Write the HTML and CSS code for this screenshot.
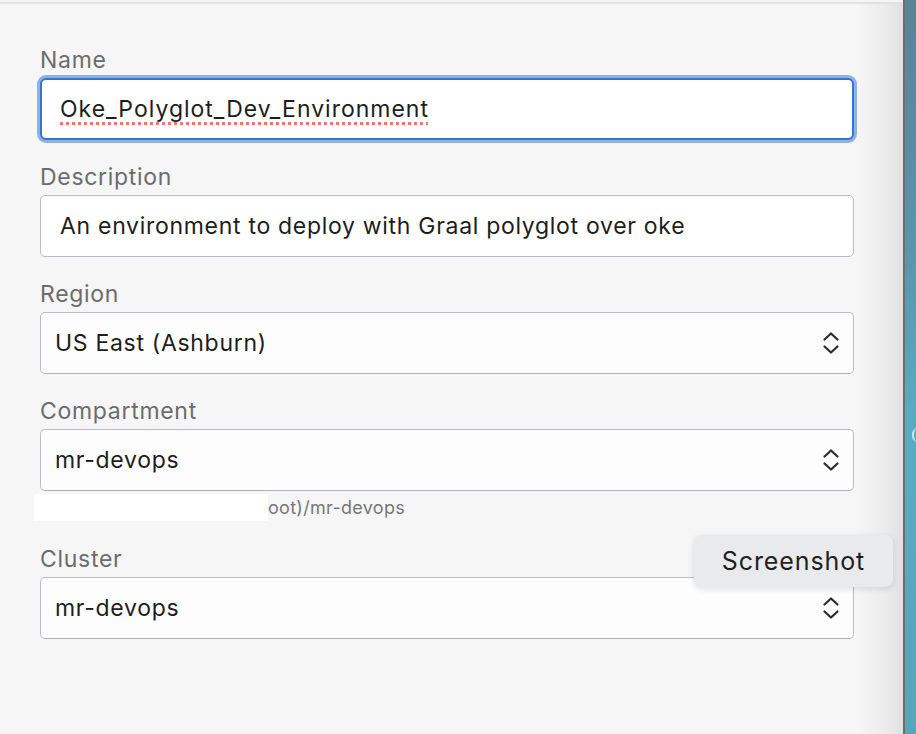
FILE: index.html
```html
<!DOCTYPE html>
<html>
<head>
<meta charset="utf-8">
<link rel="stylesheet" href="styles.css">
</head>
<body>
<div class="window">
  <main class="panel">
    <div class="topline"></div>
    <form class="form">
      <div class="field">
        <div class="label">Name</div>
        <div class="input focused"><span class="misspelled">Oke_Polyglot_Dev_Environment</span></div>
      </div>
      <div class="field">
        <div class="label">Description</div>
        <div class="input">An environment to deploy with Graal polyglot over oke</div>
      </div>
      <div class="field">
        <div class="label">Region</div>
        <div class="select"><span>US East (Ashburn)</span>
          <svg class="chev" width="18" height="26" viewBox="0 0 18 26"><path d="M2.5 9.5 L9 3.5 L15.5 9.5 M2.5 16.5 L9 22.5 L15.5 16.5" fill="none" stroke="#2b2b2b" stroke-width="2.2" stroke-linecap="round" stroke-linejoin="round"/></svg>
        </div>
      </div>
      <div class="field">
        <div class="label">Compartment</div>
        <div class="select"><span>mr-devops</span>
          <svg class="chev" width="18" height="26" viewBox="0 0 18 26"><path d="M2.5 9.5 L9 3.5 L15.5 9.5 M2.5 16.5 L9 22.5 L15.5 16.5" fill="none" stroke="#2b2b2b" stroke-width="2.2" stroke-linecap="round" stroke-linejoin="round"/></svg>
        </div>
        <div class="helper"><span class="redact"></span><span class="helper-text">oot)/mr-devops</span></div>
      </div>
      <div class="field">
        <div class="label">Cluster</div>
        <div class="select"><span>mr-devops</span>
          <svg class="chev" width="18" height="26" viewBox="0 0 18 26"><path d="M2.5 9.5 L9 3.5 L15.5 9.5 M2.5 16.5 L9 22.5 L15.5 16.5" fill="none" stroke="#2b2b2b" stroke-width="2.2" stroke-linecap="round" stroke-linejoin="round"/></svg>
        </div>
      </div>
    </form>
  </main>
  <div class="divider"></div>
  <div class="backdrop"><span class="peek"></span></div>
  <div class="tooltip">Screenshot</div>
</div>
</body>
</html>
```

FILE: styles.css
```css
* { box-sizing: border-box; }
html, body { margin: 0; padding: 0; height: 100%; }
body {
  font-family: Inter, "Noto Sans", "Liberation Sans", sans-serif;
  background: #f6f6f6;
  overflow: hidden;
}
.window {
  position: relative;
  display: flex;
  height: 734px;
  width: 916px;
}
.panel {
  width: 903px;
  background: linear-gradient(to right, #f6f6f6 0, #f6f6f6 856px, #ececec 885px, #e0e0e0 903px);
  display: flex;
  flex-direction: column;
}
.topline {
  height: 4px;
  border-top: 2px solid #f4f4f4;
  border-bottom: 2px solid #e2e2e2;
  background: #e6e6e6;
}
.form {
  padding: 43px 0 0 40px;
  width: 854px;
  display: flex;
  flex-direction: column;
  gap: 24px;
}
.field { display: flex; flex-direction: column; }
.label {
  font-size: 23px;
  line-height: 26px;
  color: #6c6c6c;
  margin-bottom: 5px;
  letter-spacing: 0.7px;
}
.input, .select {
  height: 62px;
  background: #fff;
  border: 1px solid #babdc1;
  border-radius: 5px;
  font-size: 23px;
  letter-spacing: 0.7px;
  color: #1d1d1d;
  display: flex;
  align-items: center;
}
.input { padding-left: 19px; }
.input.focused {
  border: 2px solid #3475d1;
  box-shadow: 0 0 0 3px rgba(60, 122, 212, 0.55);
  padding-left: 18px;
  border-radius: 6px;
}
.misspelled {
  letter-spacing: 1px;
  text-decoration-line: underline;
  text-decoration-style: dotted;
  text-decoration-color: #f0776b;
  text-decoration-thickness: 3px;
  text-underline-offset: 5px;
}
.select {
  padding-left: 14px;
  padding-right: 13px;
  justify-content: space-between;
  background: #fdfdfd;
  border-bottom-color: #aeb1b6;
}
.chev { display: block; }
.helper {
  display: flex;
  align-items: center;
  margin-top: 3px;
  margin-left: -6px;
  height: 27px;
  margin-bottom: 1px;
}
.redact {
  width: 234px;
  height: 27px;
  background: #fff;
}
.helper-text {
  font-size: 18px;
  letter-spacing: 0.3px;
  color: #777;
}
.divider {
  width: 2px;
  background: #6b6d6e;
}
.backdrop {
  position: relative;
  flex: 1;
  background: linear-gradient(to bottom, #5b8297 0, #5a95ab 250px, #5aabc2 420px, #58a4bb 734px);
}
.peek {
  position: absolute;
  left: 7px;
  top: 428px;
  width: 6px;
  height: 14px;
  border-left: 2px solid #cfe6ee;
  border-radius: 8px 0 0 8px;
}
.tooltip {
  position: absolute;
  left: 694px;
  top: 535px;
  width: 199px;
  height: 52px;
  background: #e9eaec;
  border-radius: 8px;
  box-shadow: 0 2px 6px rgba(0,0,0,0.12);
  font-size: 25px;
  letter-spacing: 0.9px;
  color: #1f1f1f;
  display: flex;
  align-items: center;
  justify-content: center;
}
```
